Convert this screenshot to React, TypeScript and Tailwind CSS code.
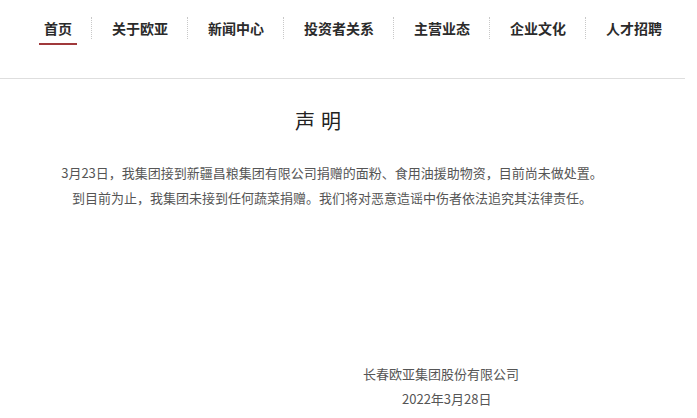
const navItems = ['首页', '关于欧亚', '新闻中心', '投资者关系', '主营业态', '企业文化', '人才招聘'];

const cjk = { fontFamily: '"Noto Sans CJK SC", "Microsoft YaHei", sans-serif' };

export default function App() {
  return (
    <div className="w-[697px] h-[418px] bg-white overflow-hidden" style={cjk}>
      {/* Top navigation */}
      <div className="w-[685px] h-[79px] border-b border-[#dedede]">
        <div className="flex items-center h-[56px] pl-6">
          {navItems.map((label, i) => (
            <div key={label} className="flex items-center">
              {i > 0 && <div className="w-0 h-[22px] border-l border-dotted border-[#c8c8c8]" />}
              <div className="pl-5 pr-[19px]">
                <span className="relative block text-[14px] leading-5 font-bold text-[#2b2b2b]">
                  {label}
                  {i === 0 && (
                    <span className="absolute -left-[5px] -right-[5px] -bottom-[7px] h-[2px] bg-[#a0393b]" />
                  )}
                </span>
              </div>
            </div>
          ))}
        </div>
      </div>

      {/* Statement */}
      <div className="mt-7 w-[636px] flex justify-center gap-[6px] text-[20px] leading-[28px] text-[#222]">
        <span>声</span>
        <span>明</span>
      </div>

      <div className="mt-[25px] w-[664px] text-center text-[13px] leading-[25px] text-[#555]">
        <p>3月23日，我集团接到新疆昌粮集团有限公司捐赠的面粉、食用油援助物资，目前尚未做处置。</p>
        <p>到目前为止，我集团未接到任何蔬菜捐赠。我们将对恶意造谣中伤者依法追究其法律责任。</p>
      </div>

      <div className="mt-[151px] text-[13px] leading-[25px] text-[#555]">
        <p className="pl-[363px]">长春欧亚集团股份有限公司</p>
        <p className="pl-[402px]">2022年3月28日</p>
      </div>
    </div>
  );
}
